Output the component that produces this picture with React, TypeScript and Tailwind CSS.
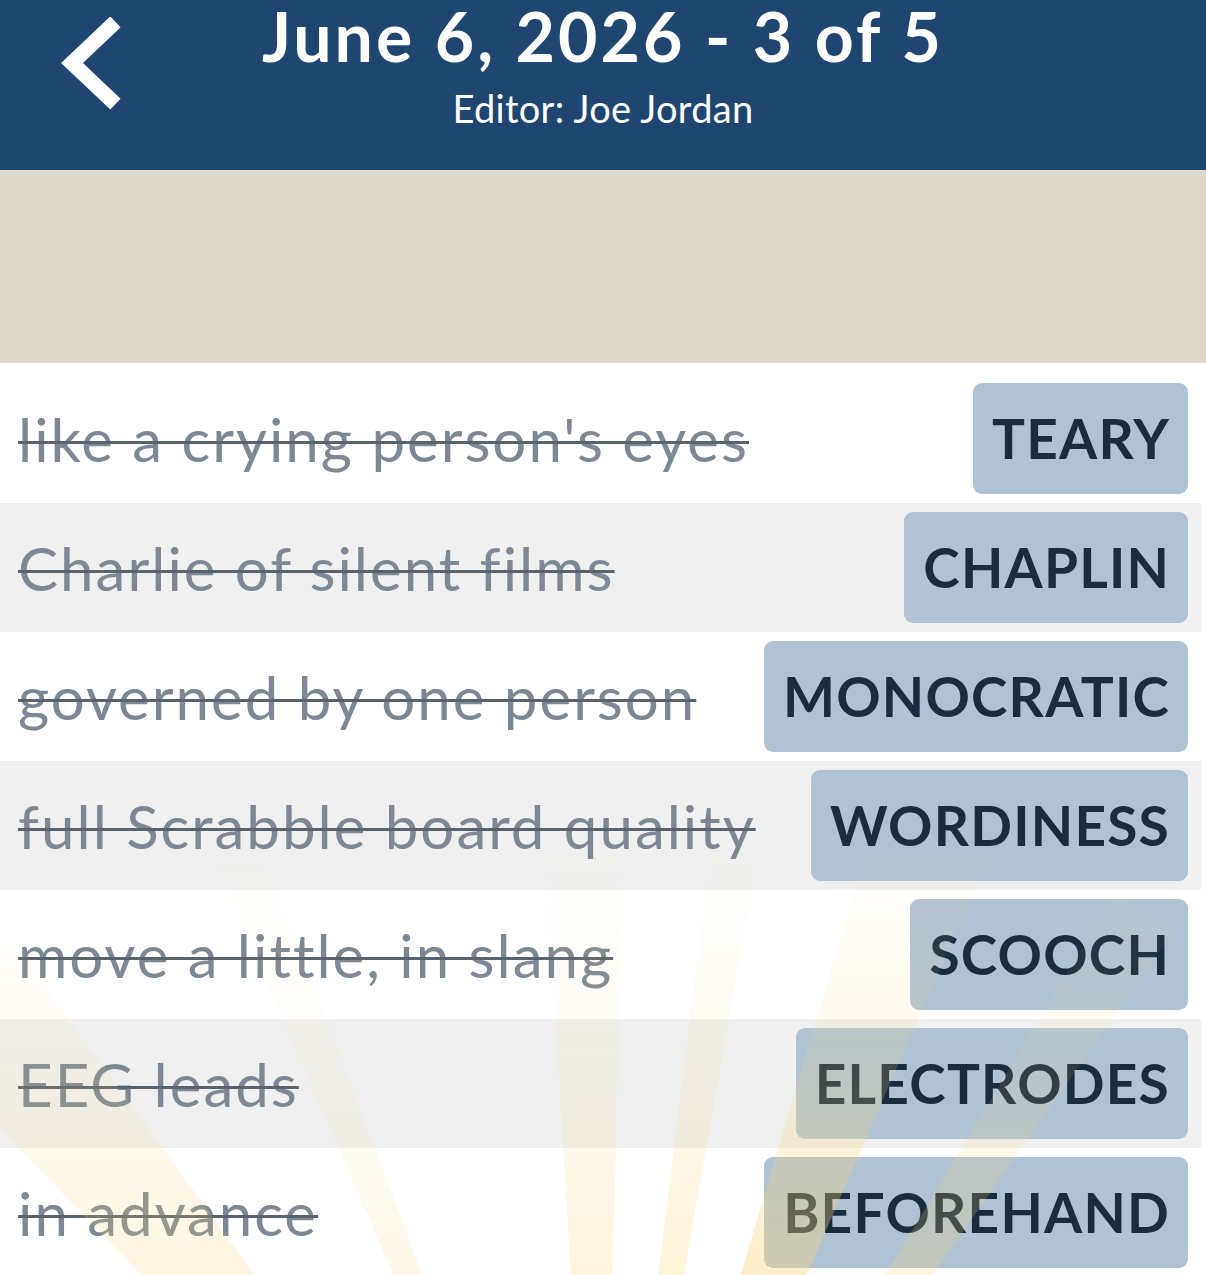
import React from "react";

/* ------------------------------------------------------------------ */
/*                               DATA                                  */
/* ------------------------------------------------------------------ */
const ROWS = [
  { clue: "like a crying person's eyes", answer: "TEARY" },
  { clue: "Charlie of silent films", answer: "CHAPLIN" },
  { clue: "governed by one person", answer: "MONOCRATIC" },
  { clue: "full Scrabble board quality", answer: "WORDINESS" },
  { clue: "move a little, in slang", answer: "SCOOCH" },
  { clue: "EEG leads", answer: "ELECTRODES" },
  { clue: "in advance", answer: "BEFOREHAND" },
];

// sun rays: angle from vertical (deg), half-width (deg), strength
const RAYS = [
  { a: -40, w: 4, o: 0.55 },
  { a: -22, w: 1.5, o: 0.4 },
  { a: -1, w: 2.5, o: 0.6 },
  { a: 8.5, w: 1.5, o: 0.7 },
  { a: 20, w: 3.5, o: 1 },
  { a: 33, w: 2, o: 0.6 },
];

const FONT = "font-['Lato','Noto_Sans',sans-serif]";

/* ------------------------------------------------------------------ */
/*                               PAGE                                  */
/* ------------------------------------------------------------------ */
export default function App() {
  return (
    <div className={`relative w-[1206px] h-[1275px] overflow-hidden bg-white ${FONT}`}>
      <Header />

      {/* banner slot */}
      <div className="h-[193px] bg-[#ddd9cc]" />

      {/* clue list */}
      <div className="pt-[11px]">
        {ROWS.map((r, i) => (
          <Row key={r.answer} clue={r.clue} answer={r.answer} shaded={i % 2 === 1} />
        ))}
      </div>

      <SunRays />
    </div>
  );
}

/* ------------------------------------------------------------------ */
/*                             HEADER                                  */
/* ------------------------------------------------------------------ */
function Header() {
  return (
    <div className="h-[170px] bg-[#1f4670] grid grid-cols-[1fr_auto_1fr] text-white">
      <div className="pl-[56px] pt-[17px]">
        <svg width="70" height="96" viewBox="0 0 70 96" fill="none">
          <path
            d="M54 10 L16 46 L54 82"
            stroke="white"
            strokeWidth="15"
            strokeLinecap="square"
            strokeLinejoin="miter"
          />
        </svg>
      </div>

      <div className="flex flex-col items-center">
        <h1 className="text-[68px] font-bold leading-none mt-[2px] tracking-[3px]">
          June 6, 2026 - 3 of 5
        </h1>
        <p className="text-[38px] leading-none mt-[19px] tracking-[0.3px]">Editor: Joe Jordan</p>
      </div>

      <div />
    </div>
  );
}

/* ------------------------------------------------------------------ */
/*                              ROW                                    */
/* ------------------------------------------------------------------ */
function Row({
  clue,
  answer,
  shaded,
}: {
  clue: string;
  answer: string;
  shaded: boolean;
}) {
  return (
    <div
      className={`h-[129px] mr-[5px] pl-[18px] pr-[13px] flex items-center justify-between ${
        shaded ? "bg-[#f0f0f0]" : "bg-white"
      }`}
    >
      <span className="text-[60px] tracking-[2px] text-[#7e8895] line-through decoration-[#59636e] decoration-[3px] whitespace-nowrap leading-none">
        {clue}
      </span>
      <span className="h-[111px] rounded-[9px] bg-[#b1c3d3] pl-[19px] pr-[18px] flex items-center text-[55px] font-bold text-[#1b2b40] leading-none tracking-[1.2px]">
        {answer}
      </span>
    </div>
  );
}

/* ------------------------------------------------------------------ */
/*                         DECORATIVE RAYS                             */
/* ------------------------------------------------------------------ */
function SunRays() {
  const ox = 600;
  const oy = 1750;
  const len = 1000;
  const rad = (d: number) => (d * Math.PI) / 180;

  return (
    <svg
      className="absolute inset-0 pointer-events-none"
      width="1206"
      height="1275"
      viewBox="0 0 1206 1275"
    >
      <defs>
        <linearGradient id="fade" x1="0" y1="0" x2="0" y2="1275" gradientUnits="userSpaceOnUse">
          <stop offset="0.66" stopColor="white" stopOpacity="0" />
          <stop offset="0.85" stopColor="white" stopOpacity="0.45" />
          <stop offset="1" stopColor="white" stopOpacity="1" />
        </linearGradient>
        <mask id="rayMask">
          <rect x="0" y="0" width="1206" height="1275" fill="url(#fade)" />
        </mask>
      </defs>
      <g mask="url(#rayMask)" fill="#f7d57a" opacity="0.4">
        {RAYS.map((r, i) => {
          const a1 = rad(r.a - r.w);
          const a2 = rad(r.a + r.w);
          const p1 = `${ox + Math.sin(a1) * len},${oy - Math.cos(a1) * len}`;
          const p2 = `${ox + Math.sin(a2) * len},${oy - Math.cos(a2) * len}`;
          return <polygon key={i} points={`${ox},${oy} ${p1} ${p2}`} opacity={r.o} />;
        })}
      </g>
    </svg>
  );
}
